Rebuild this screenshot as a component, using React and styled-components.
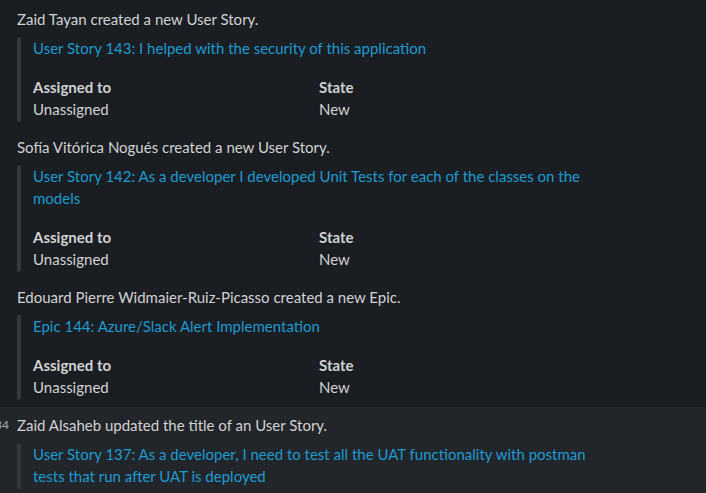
import React from "react";
import styled, { createGlobalStyle } from "styled-components";

const Global = createGlobalStyle`
  html, body { margin: 0; padding: 0; background: #1a1d21; }
  body { font-family: Lato, "Noto Sans", sans-serif; -webkit-font-smoothing: antialiased; }
  * { box-sizing: border-box; }
`;

const Feed = styled.div`
  width: 706px;
  height: 493px;
  overflow: hidden;
  background: #1a1d21;
  padding-top: 1px;
`;

const Message = styled.div`
  position: relative;
  padding: 7px 0 7px 17px;
  background: ${(p) => (p.$hover ? "#222529" : "transparent")};
`;

const Time = styled.span`
  position: absolute;
  right: calc(100% - 9px);
  top: 7px;
  font-size: 12px;
  line-height: 22px;
  color: #ababad;
  white-space: nowrap;
`;

const Header = styled.div`
  font-size: 15px;
  line-height: 22px;
  color: #d1d2d3;
`;

const Attachment = styled.div`
  display: flex;
  margin-top: 7px;
`;

const Bar = styled.div`
  flex: 0 0 4px;
  border-radius: 8px;
  background: #35373b;
`;

const Body = styled.div`
  padding: 0 0 2px 12px;
  width: 580px;
`;

const Title = styled.a`
  display: block;
  font-size: 15px;
  line-height: 22px;
  color: #1d9bd1;
  text-decoration: none;
  max-width: 560px;
`;

const Fields = styled.div`
  display: grid;
  grid-template-columns: 286px 286px;
  margin-top: 17px;
`;

const Label = styled.div`
  font-size: 15px;
  line-height: 22px;
  font-weight: 700;
  color: #d1d2d3;
`;

const Value = styled.div`
  font-size: 15px;
  line-height: 22px;
  color: #d1d2d3;
`;

const items = [
  {
    who: "Zaid Tayan created a new User Story.",
    title: "User Story 143: I helped with the security of this application",
    fields: true,
  },
  {
    who: "Sofía Vitórica Nogués created a new User Story.",
    title:
      "User Story 142: As a developer I developed Unit Tests for each of the classes on the models",
    fields: true,
  },
  {
    who: "Edouard Pierre Widmaier-Ruiz-Picasso created a new Epic.",
    title: "Epic 144: Azure/Slack Alert Implementation",
    fields: true,
  },
  {
    who: "Zaid Alsaheb updated the title of an User Story.",
    title:
      "User Story 137: As a developer, I need to test all the UAT functionality with postman tests that run after UAT is deployed",
    fields: false,
    hover: true,
    time: "2:34",
  },
];

export default function App() {
  return (
    <>
      <Global />
      <Feed>
        {items.map((m, i) => (
          <Message key={i} $hover={m.hover}>
            {m.time && <Time>{m.time}</Time>}
            <Header>{m.who}</Header>
            <Attachment>
              <Bar />
              <Body>
                <Title href="#">{m.title}</Title>
                {m.fields && (
                  <Fields>
                    <div>
                      <Label>Assigned to</Label>
                      <Value>Unassigned</Value>
                    </div>
                    <div>
                      <Label>State</Label>
                      <Value>New</Value>
                    </div>
                  </Fields>
                )}
              </Body>
            </Attachment>
          </Message>
        ))}
      </Feed>
    </>
  );
}
